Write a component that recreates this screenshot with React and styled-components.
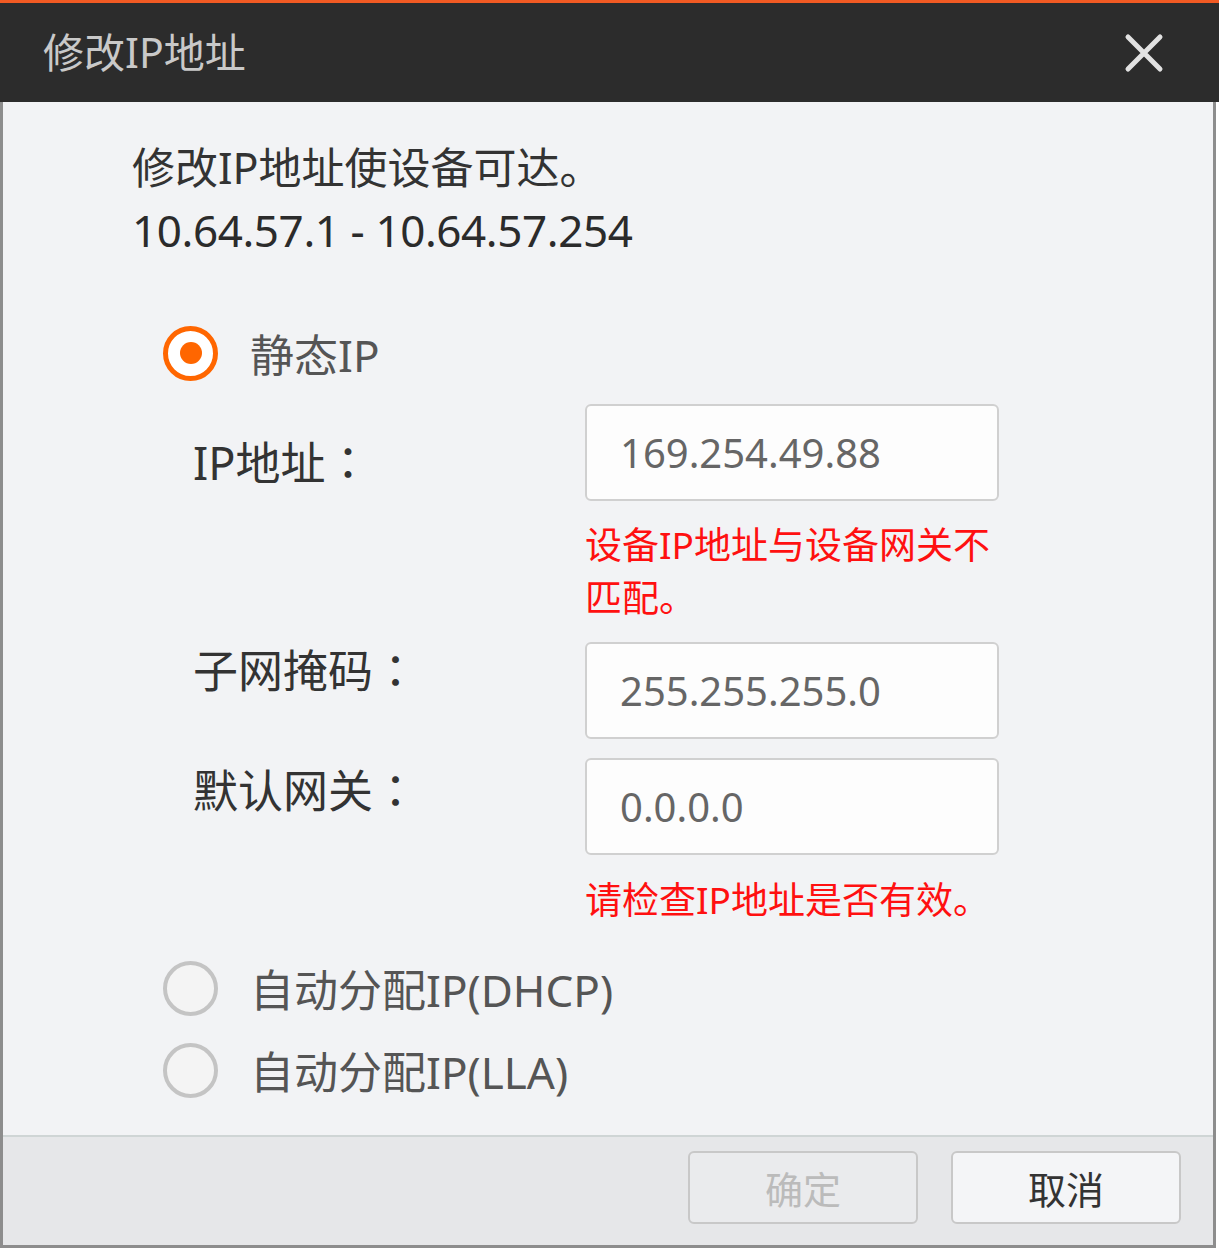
import styled, { createGlobalStyle } from 'styled-components'

const Global = createGlobalStyle`
  html, body {
    margin: 0;
    padding: 0;
    background: #ffffff;
  }
  body {
    font-family: "Noto Sans", "Noto Sans CJK SC", sans-serif;
  }
`

const Dialog = styled.div`
  width: 1219px;
  box-sizing: border-box;
  border-top: 3px solid #f25a23;
  display: flex;
  flex-direction: column;
`

const TitleBar = styled.div`
  height: 99px;
  background: #2c2c2c;
  display: flex;
  align-items: center;
  justify-content: space-between;
  padding: 0 55px 0 43px;
`

const Title = styled.h1`
  margin: 0;
  font-size: 41px;
  font-weight: 400;
  color: #c9c9c9;
  line-height: 1;
`

const Close = styled.button`
  width: 40px;
  height: 40px;
  padding: 0;
  border: none;
  background: none;
  display: flex;
  cursor: pointer;
`

const Frame = styled.div`
  border: 3px solid #8d8d8d;
  border-top: none;
  margin-right: 3px;
  box-shadow: inset 2px 0 0 #ffffff, inset -2px 0 0 #ffffff;
`

const Body = styled.div`
  background: #f2f3f5;
  padding: 40px 0 35px 129px;
  border-bottom: 2px solid #cfd5d5;
`

const Intro = styled.p`
  margin: 0;
  font-size: 43px;
  line-height: 52px;
  color: #333333;
`

const Range = styled.p`
  margin: 0;
  font-size: 44px;
  line-height: 72px;
  color: #2b2b2b;
  letter-spacing: -0.4px;
`

const RadioRow = styled.label`
  display: flex;
  align-items: center;
  gap: 32px;
  height: 60px;
  margin-top: ${p => p.$top}px;
  margin-left: 31px;
  font-size: 44px;
  color: #555555;
  cursor: pointer;
`

const RadioMark = styled.span`
  width: 55px;
  height: 55px;
  box-sizing: border-box;
  border-radius: 50%;
  border: ${p => (p.$checked ? '5px solid #ff6600' : '4px solid #c4c4c4')};
  background: ${p => (p.$checked ? '#ffffff' : '#f4f4f4')};
  display: flex;
  align-items: center;
  justify-content: center;
  flex-shrink: 0;

  &::after {
    content: '';
    width: 22px;
    height: 22px;
    border-radius: 50%;
    background: #ff6600;
    display: ${p => (p.$checked ? 'block' : 'none')};
  }
`

const Form = styled.div`
  margin: 21px 0 0 61px;
  display: flex;
  flex-direction: column;
`

const FieldRow = styled.div`
  display: grid;
  grid-template-columns: 392px 414px;
  margin-top: ${p => p.$top || 0}px;
`

const Label = styled.span`
  padding-top: ${p => p.$offset}px;
  font-size: 45px;
  line-height: 53px;
  color: #333333;
`

// centred full-width colon, as the original UI draws it
const Colon = styled.span`
  font-family: "Noto Sans CJK TC", sans-serif;
`

const Field = styled.input`
  width: 414px;
  height: 97px;
  box-sizing: border-box;
  border: 2px solid #d0d0d0;
  border-radius: 6px;
  background: #fdfdfd;
  padding: 0 0 0 33px;
  font-family: "Noto Sans", "Noto Sans CJK SC", sans-serif;
  font-size: 40px;
  color: #666666;
  outline: none;
`

const Hint = styled.p`
  grid-column: 2;
  margin: 0;
  font-size: 37px;
  line-height: 53px;
  color: #ff1010;
`

const Footer = styled.div`
  background: #e6e7e9;
  display: flex;
  justify-content: flex-end;
  gap: 33px;
  padding: 14px 32px 21px 0;
`

const Button = styled.button`
  width: 230px;
  height: 73px;
  box-sizing: border-box;
  border: 2px solid #c8c8c8;
  border-radius: 6px;
  background: ${p => (p.disabled ? '#eaebed' : '#f4f5f7')};
  color: ${p => (p.disabled ? '#bbbbbb' : '#333333')};
  font-family: "Noto Sans", "Noto Sans CJK SC", sans-serif;
  font-size: 38px;
  cursor: ${p => (p.disabled ? 'default' : 'pointer')};
`

const fields = [
  { label: 'IP地址', value: '169.254.49.88', offset: 30, top: 0, hint: ['设备IP地址与设备网关不匹配。', 17] },
  { label: '子网掩码', value: '255.255.255.0', offset: 0, top: 18 },
  { label: '默认网关', value: '0.0.0.0', offset: 4, top: 19, hint: ['请检查IP地址是否有效。', 18] },
]

const App = () => {
  return (
    <>
      <Global />
      <Dialog>
        <TitleBar>
          <Title>修改IP地址</Title>
          <Close aria-label="关闭">
            <svg width="40" height="40" viewBox="0 0 40 40">
              <path d="M4 4 L36 36 M36 4 L4 36" stroke="#e2e2e2" strokeWidth="5" strokeLinecap="round" />
            </svg>
          </Close>
        </TitleBar>
        <Frame>
          <Body>
            <Intro>修改IP地址使设备可达。</Intro>
            <Range>10.64.57.1 - 10.64.57.254</Range>

            <RadioRow $top={57}>
              <RadioMark $checked />
              静态IP
            </RadioRow>

            <Form>
              {fields.map(f => (
                <div key={f.label}>
                  <FieldRow $top={f.top}>
                    <Label $offset={f.offset}>
                      {f.label}
                      <Colon>：</Colon>
                    </Label>
                    <Field readOnly value={f.value} />
                  </FieldRow>
                  {f.hint && (
                    <FieldRow $top={f.hint[1]}>
                      <Hint>{f.hint[0]}</Hint>
                    </FieldRow>
                  )}
                </div>
              ))}
            </Form>

            <RadioRow $top={32}>
              <RadioMark />
              自动分配IP(DHCP)
            </RadioRow>
            <RadioRow $top={22}>
              <RadioMark />
              自动分配IP(LLA)
            </RadioRow>
          </Body>
          <Footer>
            <Button disabled>确定</Button>
            <Button>取消</Button>
          </Footer>
        </Frame>
      </Dialog>
    </>
  )
}

export default App
